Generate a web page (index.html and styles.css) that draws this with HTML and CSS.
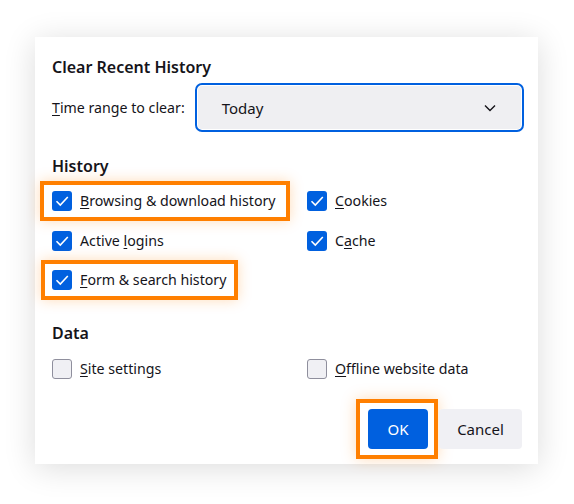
FILE: index.html
```html
<!DOCTYPE html>
<html lang="en">
<head>
<meta charset="utf-8">
<title>Clear Recent History</title>
<link rel="stylesheet" href="styles.css">
</head>
<body>
<div class="dialog">
  <h1 class="title">Clear Recent History</h1>
  <div class="time-row">
    <span class="time-label"><u>T</u>ime range to clear:</span>
    <div class="select">
      <span class="select-value">Today</span>
      <svg class="chevron" width="12" height="8" viewBox="0 0 12 8"><path d="M1 1.5 L6 6.5 L11 1.5" fill="none" stroke="#15141a" stroke-width="1.4"/></svg>
    </div>
  </div>

  <h2 class="section">History</h2>
  <div class="grid history">
    <div class="cell"><label class="check hl hl-1"><span class="box on"><svg width="20" height="20" viewBox="0 0 20 20"><path d="M4.5 10.2 L8.3 14 L15.8 6" fill="none" stroke="#fff" stroke-width="1.6"/></svg></span><span><u>B</u>rowsing &amp; download history</span></label></div>
    <div class="cell"><label class="check"><span class="box on"><svg width="20" height="20" viewBox="0 0 20 20"><path d="M4.5 10.2 L8.3 14 L15.8 6" fill="none" stroke="#fff" stroke-width="1.6"/></svg></span><span><u>C</u>ookies</span></label></div>
    <div class="cell"><label class="check"><span class="box on"><svg width="20" height="20" viewBox="0 0 20 20"><path d="M4.5 10.2 L8.3 14 L15.8 6" fill="none" stroke="#fff" stroke-width="1.6"/></svg></span><span>Active <u>l</u>ogins</span></label></div>
    <div class="cell"><label class="check"><span class="box on"><svg width="20" height="20" viewBox="0 0 20 20"><path d="M4.5 10.2 L8.3 14 L15.8 6" fill="none" stroke="#fff" stroke-width="1.6"/></svg></span><span>C<u>a</u>che</span></label></div>
    <div class="cell"><label class="check hl hl-2"><span class="box on"><svg width="20" height="20" viewBox="0 0 20 20"><path d="M4.5 10.2 L8.3 14 L15.8 6" fill="none" stroke="#fff" stroke-width="1.6"/></svg></span><span><u>F</u>orm &amp; search history</span></label></div>
  </div>

  <h2 class="section data">Data</h2>
  <div class="grid">
    <div class="cell"><label class="check"><span class="box"></span><span><u>S</u>ite settings</span></label></div>
    <div class="cell"><label class="check"><span class="box"></span><span><u>O</u>ffline website data</span></label></div>
  </div>

  <div class="buttons">
    <button class="btn primary hl hl-3">OK</button>
    <button class="btn">Cancel</button>
  </div>
</div>
</body>
</html>
```

FILE: styles.css
```css
* { box-sizing: border-box; }
html, body { margin: 0; padding: 0; background: #fff; }
body {
  width: 574px;
  height: 504px;
  overflow: hidden;
  font-family: "Noto Sans", "Open Sans", sans-serif;
  color: #15141a;
  font-size: 14.2px;
}
u { text-decoration-thickness: 1px; text-underline-offset: 2px; }

.dialog {
  margin: 37px 0 0 35px;
  width: 503px;
  height: 427px;
  background: #fff;
  padding: 20px 16px 15px 17px;
  box-shadow: 0 4px 30px rgba(0, 0, 0, 0.14);
  display: flex;
  flex-direction: column;
}

.title {
  margin: 0;
  font-size: 16px;
  font-weight: 600;
  line-height: 20px;
}

.time-row {
  margin-top: 6px;
  display: flex;
  align-items: center;
  gap: 13px;
  margin-right: -2px;
  padding: 3px 3px 3px 0;
}
.time-label { line-height: 20px; }
.select {
  flex: 1;
  height: 43px;
  background: #efeff2;
  border-radius: 4px;
  outline: 2px solid #0060df;
  outline-offset: 1px;
  display: flex;
  align-items: center;
  justify-content: space-between;
  padding: 0 25px 0 24px;
  font-size: 15px;
}
.chevron { display: block; }

.section {
  margin: 24px 0 0;
  font-size: 16px;
  font-weight: 600;
  line-height: 20px;
}
.section.data { margin-top: 33px; }

.grid {
  display: grid;
  grid-template-columns: 255px 1fr;
  row-gap: 20px;
  margin-top: 15px;
}
.history { row-gap: 19.5px; }
.data + .grid { margin-top: 16px; }

.cell { height: 20px; }
.check {
  position: relative;
  display: inline-flex;
  align-items: center;
  gap: 8px;
  height: 20px;
  line-height: 20px;
  white-space: nowrap;
}
.box {
  width: 20px;
  height: 20px;
  border-radius: 3px;
  border: 1px solid #8f8f9d;
  background: #f0f0f4;
  flex: none;
  display: block;
}
.box.on {
  background: #0060df;
  border: none;
}
.box svg { display: block; }

.hl::after {
  content: "";
  position: absolute;
  border: 4px solid #ff7f00;
  box-shadow: 0 0 14px rgba(255, 128, 0, 0.28);
  pointer-events: none;
}
.hl-1::after { top: -10px; bottom: -10px; left: -12px; right: -14px; }
.hl-2::after { top: -10px; bottom: -10px; left: -11px; right: -12px; }
.hl-3::after { top: -10px; bottom: -10px; left: -12px; right: -10px; }

.buttons {
  margin-top: auto;
  display: flex;
  justify-content: flex-end;
  gap: 11px;
}
.btn {
  position: relative;
  height: 40px;
  border: none;
  border-radius: 4px;
  background: #f0f0f4;
  color: #15141a;
  font-family: inherit;
  font-size: 15px;
  padding: 0;
  width: 83px;
}
.btn.primary {
  background: #0060df;
  color: #fff;
  width: 60px;
}
```
